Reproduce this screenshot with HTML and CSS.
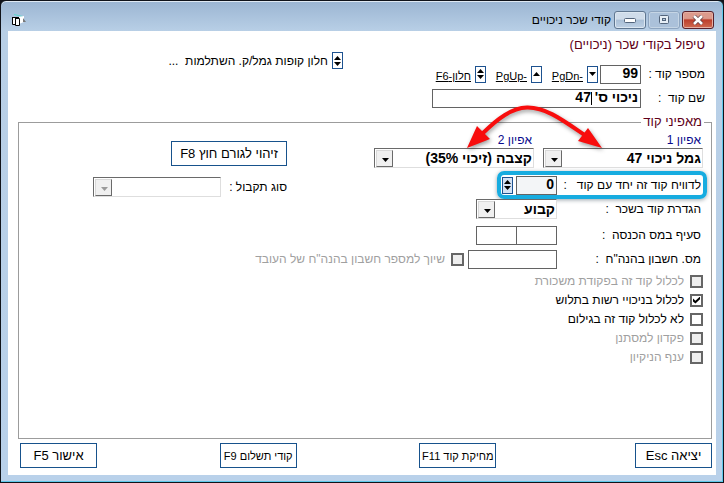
FILE: index.html
```html
<!DOCTYPE html>
<html lang="he" dir="rtl">
<head>
<meta charset="utf-8">
<title>קודי שכר ניכויים</title>
<link rel="stylesheet" href="styles.css">
</head>
<body>
<div class="window">
  <header class="titlebar">
    <div class="controls">
      <button class="ctl close" type="button" aria-label="סגור"><svg width="12" height="10" viewBox="0 0 12 10"><path d="M2 1L10 9M10 1L2 9" stroke="#5a3a40" stroke-width="4"/><path d="M2 1L10 9M10 1L2 9" stroke="#fff" stroke-width="2.6"/></svg></button>
      <button class="ctl max" type="button" aria-label="הגדל"><svg width="12" height="10" viewBox="0 0 12 10"><rect x="1.5" y=".5" width="9" height="8" rx="1" fill="#e6eef6" stroke="#53657c"/><rect x="4.5" y="3.5" width="3" height="2" fill="#b9cce0" stroke="#53657c"/></svg></button>
      <button class="ctl min" type="button" aria-label="מזער"><svg width="12" height="6" viewBox="0 0 12 6"><rect x=".5" y="1.5" width="11" height="4" rx="1" fill="#fff" stroke="#53657c"/></svg></button>
    </div>
    <h1 class="title">קודי שכר ניכויים</h1>
    <svg class="appicon" width="16" height="14" viewBox="0 0 16 14"><path d="M3 1.500l9 2" stroke="#5fd8cf"/><path d="M7 4l6-1v6l-5 2z" fill="#fff"/><path d="M12 5l3 4h-3z" fill="#777"/><path d="M1.500 4.500h3v7h-3zM4.500 5.500h4v7h-4z" fill="#fff" stroke="#000"/><path d="M1 4.500h7" stroke="#000"/></svg>
  </header>

  <main class="client">
    <div class="top">
      <div class="topform">
        <h2 class="heading">טיפול בקודי שכר (ניכויים)</h2>
        <div class="row coderow">
          <label class="label" for="code">מספר קוד :</label>
          <input class="box short" id="code" value="99">
          <button class="spin" type="button" aria-label="הבא"><svg width="7" height="12"><path d="M0 4h7L3.500 8z"/></svg></button>
          <a class="key" href="#"><bdo dir="ltr">PgDn-</bdo></a>
          <button class="spin" type="button" aria-label="הקודם"><svg width="7" height="12"><path d="M0 8h7L3.500 4z"/></svg></button>
          <a class="key" href="#"><bdo dir="ltr">PgUp-</bdo></a>
          <button class="spin" type="button" aria-label="חלון"><svg width="7" height="12"><path d="M0 5h7L3.500 1zM0 7h7L3.500 11z"/></svg></button>
          <a class="key" href="#">חלון-F6</a>
        </div>
        <div class="row">
          <label class="label" for="name">שם קוד&nbsp; :</label>
          <span class="namewrap"><input class="box" id="name" value="ניכוי ס' 47"><i class="caret"></i></span>
        </div>
      </div>
      <div class="funds">
        <button class="spin" type="button" aria-label="פתח חלון"><svg width="7" height="12"><path d="M0 5h7L3.500 1zM0 7h7L3.500 11z"/></svg></button>
        <span>חלון קופות גמל/ק. השתלמות&nbsp; ...</span>
      </div>
    </div>

    <fieldset class="group">
      <legend>מאפיני קוד</legend>
      <div class="fields">
        <div class="pair">
          <div class="col">
            <label class="blue" for="t1">אפיון 1</label>
            <span class="combo"><select id="t1"><option>גמל ניכוי 47</option></select><svg class="drop" width="17" height="17"><path d="M5 7h7L8.500 11z"/></svg></span>
          </div>
          <div class="col">
            <label class="blue" for="t2">אפיון 2</label>
            <span class="combo"><select id="t2"><option>קצבה (זיכוי 35%)</option></select><svg class="drop" width="17" height="17"><path d="M5 7h7L8.500 11z"/></svg></span>
          </div>
        </div>
        <div class="marked">
          <label class="flabel" for="with">לדוויח קוד זה יחד עם קוד&nbsp; &nbsp;:</label>
          <input class="box short" id="with" value="0">
          <button class="spin tint" type="button" aria-label="בחר קוד"><svg width="7" height="12"><path d="M0 5h7L3.500 1zM0 7h7L3.500 11z"/></svg></button>
        </div>
        <div class="line">
          <label class="flabel" for="def">הגדרת קוד בשכר&nbsp; :</label>
          <span class="combo small"><select id="def"><option>קבוע</option></select><svg class="drop" width="17" height="17"><path d="M5 7h7L8.500 11z"/></svg></span>
        </div>
        <div class="line tax">
          <label class="flabel" for="tax1">סעיף במס הכנסה&nbsp; :</label>
          <input class="box short" id="tax1"><input class="box short joined" aria-label="סעיף משנה">
        </div>
        <div class="line acct">
          <label class="flabel" for="acc">מס. חשבון בהנה"ח&nbsp; :</label>
          <input class="box account" id="acc">
          <label class="check off"><input type="checkbox" disabled>שיוך למספר חשבון בהנה"ח של העובד</label>
        </div>
        <div class="checks">
          <label class="check off"><input type="checkbox" disabled>לכלול קוד זה בפקודת משכורת</label>
          <label class="check"><input type="checkbox" checked>לכלול בניכויי רשות בתלוש</label>
          <label class="check"><input type="checkbox">לא לכלול קוד זה בגילום</label>
          <label class="check off"><input type="checkbox" disabled>פקדון למסתנן</label>
          <label class="check off"><input type="checkbox" disabled>ענף הניקיון</label>
        </div>
      </div>
      <div class="side">
        <button class="btn ident" type="button">זיהוי לגורם חוץ F8</button>
        <div class="receipt">
          <label for="rec">סוג תקבול :</label>
          <span class="combo receiptbox"><select id="rec" disabled><option></option></select><svg class="drop off" width="17" height="17"><path d="M5 7h7L8.500 11z"/></svg></span>
        </div>
      </div>
      <svg class="arrow" width="150" height="56" viewBox="0 0 150 56">
        <path d="M22 35C38 19 52 9 67 8.500C86 8 104 22 126 37" fill="none" stroke="#f80d0d" stroke-width="4"/>
        <path d="M7 49L17 27L30 40zM142 49L118 42L128 29z" fill="#f80d0d"/>
      </svg>
    </fieldset>

    <footer class="actions">
      <button class="btn exit" type="button">יציאה Esc</button>
      <button class="btn tiny" type="button">מחיקת קוד F11</button>
      <button class="btn tiny" type="button">קודי תשלום F9</button>
      <button class="btn" type="button">אישור F5</button>
    </footer>
  </main>
</div>
</body>
</html>
```
FILE: styles.css
```css
* { box-sizing: border-box; }

body {
  margin: 0;
  background: #10131a;
  font: 12px/16px "Liberation Sans", Arial, sans-serif;
  color: #000;
}

input, select, button { font: inherit; color: inherit; margin: 0; }
button { cursor: pointer; }

.window {
  display: flex;
  flex-direction: column;
  min-height: 100vh;
  padding: 1px 7px 7px;
  border: 1px solid #10131a;
  border-radius: 6px 6px 0 0;
  background: linear-gradient(#9bb5d2, #b8cfe6 30px, #b9d1ea);
  box-shadow: inset 0 -1px #5fc8ea, inset -1px 0 #5fc8ea, inset 0 1px #dfe9f3;
}

/* Title bar */
.titlebar {
  display: flex;
  align-items: center;
  gap: 3px;
  height: 29px;
  padding: 6px 2px 0;
}
.controls { display: flex; gap: 2px; }
.ctl {
  display: flex;
  align-items: center;
  justify-content: center;
  width: 32px;
  height: 18px;
  padding: 0;
  border: 1px solid #5f7690;
  border-radius: 3px;
  background: linear-gradient(#cfdcea 45%, #a9bfd6 50%, #bdd0e4);
  box-shadow: inset 0 0 0 1px #dce7f1;
}
.max { border-color: #8ea5c0; box-shadow: inset 0 0 0 1px #c5d5e5; background: #abc1da; }
.close {
  border-color: #58202a;
  background: linear-gradient(#dc9a8c 40%, #bc3f2c 50%, #cf6a50);
  box-shadow: inset 0 0 0 1px #e5b0a4;
}
.title { flex: 1; margin: 0; font-size: 12px; font-weight: 400; line-height: 18px; }
.appicon { margin-left: 1px; }

/* Client area */
.client {
  flex: 1;
  display: flex;
  flex-direction: column;
  background: #fff;
  padding: 6px 4px 7px 10px;
}
.top { display: flex; padding-right: 7px; }
.topform { width: 273px; }
.heading {
  margin: 0 0 11px;
  font-size: 13px;
  line-height: 16px;
  font-weight: 400;
  color: #600018;
  white-space: nowrap;
}
.row { display: flex; align-items: center; height: 20px; }
.coderow { margin-bottom: 4px; }
.label { width: 64px; flex: none; }
.box {
  width: 100%;
  height: 19px;
  padding: 0 2px 2px;
  border: 1px solid #636363;
  border-radius: 0;
  background: #fff;
  font-size: 14px;
  font-weight: 700;
}
.short { width: 41px; flex: none; }
.namewrap { position: relative; flex: 1; display: flex; }
.caret { position: absolute; right: 49px; top: 3px; width: 1px; height: 13px; background: #000; }
.spin {
  display: flex;
  align-items: center;
  justify-content: center;
  flex: none;
  width: 11px;
  height: 17px;
  padding: 0;
  border: 1px solid #1d5290;
  background: #fff;
}
.coderow .spin { margin-right: 2px; }
.key { width: 44px; padding: 4px 4px 0 0; font-size: 11px; line-height: 13px; color: #000; white-space: nowrap; }
.funds { display: flex; gap: 4px; height: 17px; margin: 15px 89px 0 0; align-items: center; white-space: nowrap; }

/* Group box */
.group {
  position: relative;
  flex: 1;
  display: flex;
  min-width: 0;
  margin: 6px 0 0;
  padding: 2px 4px 0;
  border: 1px solid #9c9c9c;
}
legend { margin-right: 3px; padding: 0 2px; font-size: 13px; line-height: 16px; color: #600018; }
.fields { width: 402px; flex: none; }
.pair { display: flex; gap: 9px; padding-right: 4px; }
.col { display: flex; flex-direction: column; width: 160px; }
.blue { padding-right: 2px; color: #0a0a8c; }
.combo {
  position: relative;
  display: flex;
  height: 20px;
  border: 1px solid;
  border-color: #6a6a6a #dedede #dedede #6a6a6a;
  background: #fff;
}
.combo select {
  width: 100%;
  padding: 0 1px 1px 20px;
  border: 0;
  background: none;
  appearance: none;
  font-size: 14px;
  font-weight: 700;
}
.drop {
  position: absolute;
  left: 1px;
  top: 1px;
  background: #f0f0f0;
  border: 1px solid;
  border-color: #d8d8d8 #6a6a6a #6a6a6a #d8d8d8;
  pointer-events: none;
}
.drop.off { fill: #9a9a9a; }
.marked {
  display: flex;
  align-items: center;
  width: 210px;
  height: 28px;
  margin: 3px 0 0;
  padding: 0 2px;
  border: 4px solid #17ace0;
  border-radius: 7px;
  box-shadow: 0 1px 4px #9aa4aa;
}
.marked .box { background: #f3f5f7; }
.marked .spin { margin-right: 3px; }
.marked .tint { background: #d3e2f4; }
.flabel { width: 144px; flex: none; white-space: nowrap; }
.line { display: flex; align-items: center; height: 20px; padding-right: 6px; }
.small { width: 81px; }
.tax { margin-top: 6px; }
.acct { margin-top: 4px; }
.joined { margin-right: -1px; }
.account { width: 89px; flex: none; margin-left: 4px; }
.checks { display: flex; flex-direction: column; gap: 3px; margin-top: 4px; padding-right: 4px; }
.check { display: flex; align-items: center; gap: 6px; white-space: nowrap; }
.check.off { color: #a0a0a0; }
.check input {
  appearance: none;
  display: flex;
  align-items: center;
  justify-content: center;
  flex: none;
  width: 13px;
  height: 13px;
  border: 2px solid #666;
  background: #fff;
}
.check input:disabled { background: #eee; }
.check input:checked::after {
  content: "";
  width: 7px;
  height: 7px;
  background: #000;
  clip-path: polygon(0 30%, 35% 60%, 100% 0, 100% 40%, 35% 100%, 0 70%);
}
.side { flex: 1; padding: 9px 18px 0 0; }
.receipt { display: flex; align-items: center; margin-top: 11px; }
.receipt label { width: 66px; flex: none; }
.receiptbox { width: 128px; }
.arrow {
  position: absolute;
  right: 101px;
  top: -31px;
  filter: drop-shadow(1px 2px 2px #0006);
  pointer-events: none;
}

/* Action buttons */
.btn {
  width: 77px;
  height: 25px;
  padding: 0;
  border: 1px solid #17528c;
  background: #fff;
  font-size: 13px;
  white-space: nowrap;
}
.ident { width: 116px; }
.tiny { font-size: 11px; }
.exit { margin-left: 16px; }
.actions { display: flex; justify-content: space-between; margin-top: 4px; padding-left: 2px; }
```
